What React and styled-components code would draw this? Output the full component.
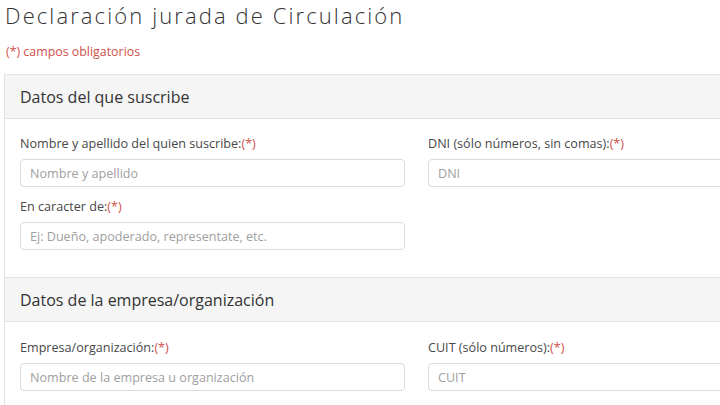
import React from "react";
import styled, { createGlobalStyle } from "styled-components";

const GlobalStyle = createGlobalStyle`
  html, body {
    margin: 0;
    background: #ffffff;
    overflow: hidden;
  }
  body {
    font-family: "Open Sans", "Liberation Sans", sans-serif;
    color: #444;
  }
`;

const Page = styled.div`
  width: 840px;
  padding: 0 0 0 4px;
`;

const Title = styled.h1`
  margin: 0;
  padding: 0 0 0 1px;
  font-size: 22px;
  font-weight: 300;
  letter-spacing: 2.1px;
  line-height: 30px;
  color: #333;
`;

const Required = styled.span`
  color: #d0504c;
`;

const Note = styled.p`
  margin: 14px 0 0;
  padding-left: 2px;
  font-size: 12.4px;
  line-height: 16px;
  color: #d0504c;
`;

const Panel = styled.section`
  border: 1px solid #e3e3e3;
  border-bottom: none;
  margin-top: ${(p) => p.$top || 0}px;
`;

const PanelHeading = styled.div`
  background: #f5f5f5;
  border-bottom: 1px solid #e3e3e3;
  height: 43px;
  display: flex;
  align-items: center;
  padding: 0 15px;
  font-size: 16px;
  color: #333;
`;

const PanelBody = styled.div`
  padding: ${(p) => p.$padTop || 17}px 15px 27px;
  display: grid;
  grid-template-columns: 385px 385px;
  column-gap: 23px;
  row-gap: 12px;
`;

const Field = styled.div`
  display: flex;
  flex-direction: column;
`;

const Label = styled.label`
  font-size: 12.6px;
  line-height: 16px;
  color: #484848;
  margin-bottom: 7px;
`;

const Input = styled.input`
  box-sizing: border-box;
  height: 28px;
  width: 100%;
  border: 1px solid #dadada;
  border-radius: 4px;
  padding: 0 9px;
  font-family: inherit;
  font-size: 12.6px;
  color: #555;
  outline: none;
  &::placeholder {
    color: #a0a0a0;
  }
`;

function FormField({ label, placeholder }) {
  return (
    <Field>
      <Label>
        {label}
        <Required>(*)</Required>
      </Label>
      <Input placeholder={placeholder} />
    </Field>
  );
}

export default function App() {
  return (
    <Page>
      <GlobalStyle />
      <Title>Declaración jurada de Circulación</Title>
      <Note>(*) campos obligatorios</Note>
      <Panel $top={14}>
        <PanelHeading>Datos del que suscribe</PanelHeading>
        <PanelBody>
          <FormField
            label="Nombre y apellido del quien suscribe:"
            placeholder="Nombre y apellido"
          />
          <FormField label="DNI (sólo números, sin comas):" placeholder="DNI" />
          <FormField
            label="En caracter de:"
            placeholder="Ej: Dueño, apoderado, representate, etc."
          />
        </PanelBody>
      </Panel>
      <Panel>
        <PanelHeading>Datos de la empresa/organización</PanelHeading>
        <PanelBody $padTop={18}>
          <FormField
            label="Empresa/organización:"
            placeholder="Nombre de la empresa u organización"
          />
          <FormField label="CUIT (sólo números):" placeholder="CUIT" />
        </PanelBody>
      </Panel>
    </Page>
  );
}
